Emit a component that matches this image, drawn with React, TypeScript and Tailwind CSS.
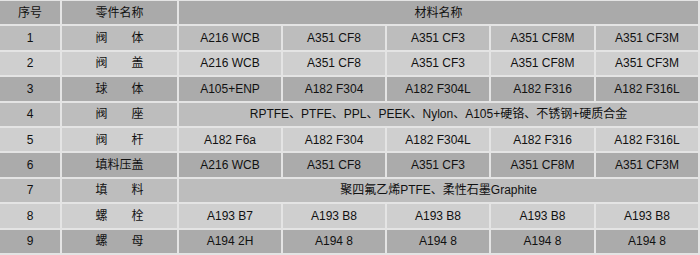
import React from "react";

const F = { fontFamily: '"Liberation Sans", Arial, "Noto Sans CJK SC", sans-serif' };

type Row = { no: string; name: string; mats: string[] | string; bg: string };

const rows: Row[] = [
  { no: "1", name: "阀　　体", mats: ["A216 WCB", "A351 CF8", "A351 CF3", "A351 CF8M", "A351 CF3M"], bg: "bg-[#bdbdbd]" },
  { no: "2", name: "阀　　盖", mats: ["A216 WCB", "A351 CF8", "A351 CF3", "A351 CF8M", "A351 CF3M"], bg: "bg-[#cfcfcf]" },
  { no: "3", name: "球　　体", mats: ["A105+ENP", "A182 F304", "A182 F304L", "A182 F316", "A182 F316L"], bg: "bg-[#ababab]" },
  { no: "4", name: "阀　　座", mats: "RPTFE、PTFE、PPL、PEEK、Nylon、A105+硬铬、不锈钢+硬质合金", bg: "bg-[#bdbdbd]" },
  { no: "5", name: "阀　　杆", mats: ["A182 F6a", "A182 F304", "A182 F304L", "A182 F316", "A182 F316L"], bg: "bg-[#cfcfcf]" },
  { no: "6", name: "填料压盖", mats: ["A216 WCB", "A351 CF8", "A351 CF3", "A351 CF8M", "A351 CF3M"], bg: "bg-[#ababab]" },
  { no: "7", name: "填　　料", mats: "聚四氟乙烯PTFE、柔性石墨Graphite", bg: "bg-[#bdbdbd]" },
  { no: "8", name: "螺　　栓", mats: ["A193 B7", "A193 B8", "A193 B8", "A193 B8", "A193 B8"], bg: "bg-[#cfcfcf]" },
  { no: "9", name: "螺　　母", mats: ["A194 2H", "A194 8", "A194 8", "A194 8", "A194 8"], bg: "bg-[#ababab]" },
];

const cell = "flex items-center justify-center whitespace-nowrap";

export default function App() {
  return (
    <div className="w-[700px] h-[255px] bg-[#e4e4e4] pt-[1px] pr-[2px] text-[12px] text-[#111]" style={F}>
      <div className="grid grid-cols-[60px_115px_102px_102px_102px_103px_102px] auto-rows-[23.4px] gap-[2px]">
        <div className={`${cell} bg-[#aaaaaa]`}>序号</div>
        <div className={`${cell} bg-[#aaaaaa]`}>零件名称</div>
        <div className={`${cell} bg-[#aaaaaa] col-span-5`}>材料名称</div>
        {rows.map((r) => (
          <React.Fragment key={r.no}>
            <div className={`${cell} ${r.bg}`}>{r.no}</div>
            <div className={`${cell} ${r.bg}`}>{r.name}</div>
            {Array.isArray(r.mats) ? (
              r.mats.map((m, i) => (
                <div key={i} className={`${cell} ${r.bg}`}>
                  {m}
                </div>
              ))
            ) : (
              <div className={`${cell} ${r.bg} col-span-5`}>{r.mats}</div>
            )}
          </React.Fragment>
        ))}
      </div>
    </div>
  );
}
